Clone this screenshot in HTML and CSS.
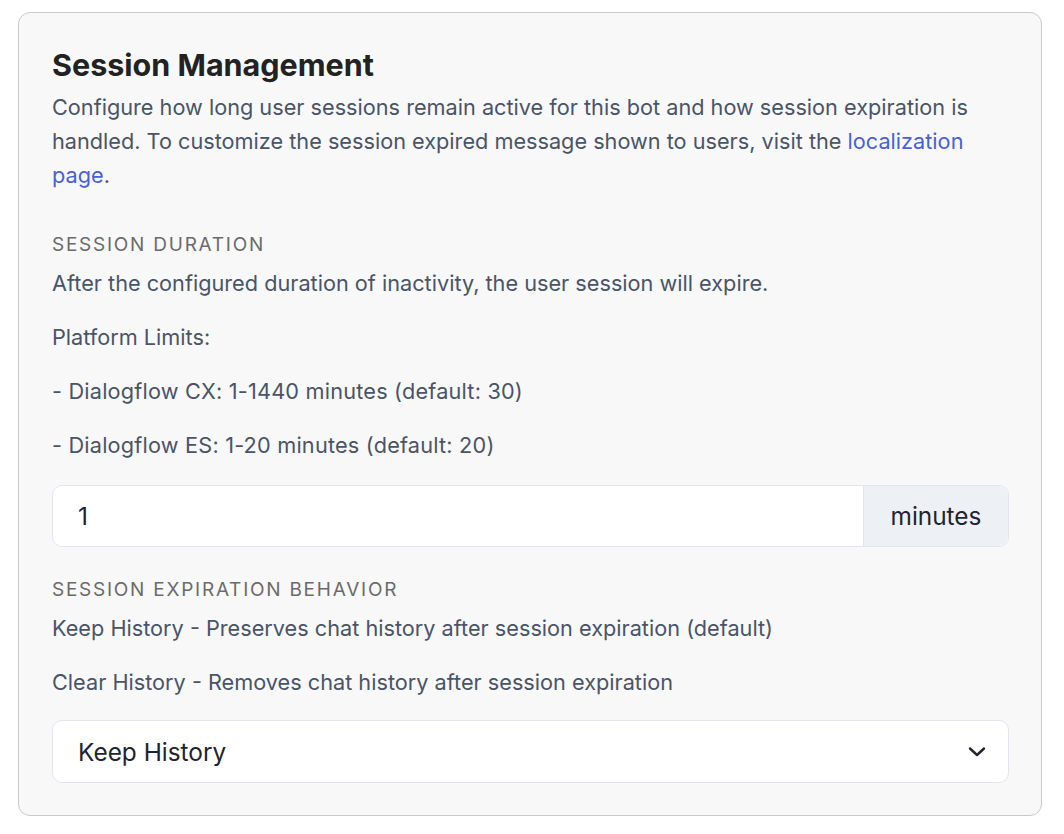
FILE: index.html
```html
<!DOCTYPE html>
<html>
<head>
<meta charset="utf-8">
<link rel="stylesheet" href="styles.css">
</head>
<body>
<section class="card">
  <h2 class="title">Session Management</h2>
  <p class="desc">Configure how long user sessions remain active for this bot and how session expiration is handled. To customize the session expired message shown to users, visit the <a class="link" href="#">localization page</a>.</p>

  <h3 class="label label-first">Session Duration</h3>
  <p class="text text-first">After the configured duration of inactivity, the user session will expire.</p>
  <p class="text">Platform Limits:</p>
  <p class="text nums">- Dialogflow CX: 1-1440 minutes (default: 30)</p>
  <p class="text nums">- Dialogflow ES: 1-20 minutes (default: 20)</p>

  <div class="input-group">
    <div class="input">1</div>
    <div class="addon">minutes</div>
  </div>

  <h3 class="label label-second">Session Expiration Behavior</h3>
  <p class="text text-first">Keep History - Preserves chat history after session expiration (default)</p>
  <p class="text">Clear History - Removes chat history after session expiration</p>

  <div class="select">
    <span>Keep History</span>
    <svg class="chevron" width="18" height="12" viewBox="0 0 18 12"><path d="M2 2.5 L9 9 L16 2.5" fill="none" stroke="#1f2430" stroke-width="2.4" stroke-linecap="round" stroke-linejoin="round"/></svg>
  </div>
</section>
</body>
</html>
```

FILE: styles.css
```css
* { box-sizing: border-box; }
html, body { margin: 0; padding: 0; background: #ffffff; }
body {
  font-family: Inter, "Noto Sans", sans-serif;
  padding: 12px 22px 0 18px;
}
.card {
  width: 1024px;
  background: #f8f8f8;
  border: 1px solid #c9c9c9;
  border-radius: 12px;
  padding: 32px 32px 32px 33px;
}
.title {
  margin: 0;
  font-size: 30.5px;
  line-height: 40px;
  font-weight: 700;
  color: #222222;
}
.desc {
  margin: 5px 0 0 0;
  font-size: 21.7px;
  line-height: 34px;
  color: #4a5467;
}
.link { color: #4a5fd8; text-decoration: none; }
.label {
  margin: 0;
  font-size: 19px;
  line-height: 28px;
  font-weight: 400;
  text-transform: uppercase;
  letter-spacing: 1.75px;
  color: #6b6b6b;
}
.label-first { margin-top: 39px; }
.label-second { margin-top: 29px; }
.text {
  margin: 20px 0 0 0;
  font-size: 21.7px;
  line-height: 34px;
  color: #4a5467;
}
.nums { letter-spacing: 0.2px; }
.text-first { margin-top: 7px; }
.input-group {
  margin-top: 23px;
  display: flex;
  height: 62px;
  border: 1px solid #e1e6ee;
  border-radius: 10px;
  overflow: hidden;
  background: #ffffff;
}
.input {
  flex: 1;
  display: flex;
  align-items: center;
  padding-left: 25px;
  font-size: 24.4px;
  color: #1f2430;
}
.addon {
  display: flex;
  align-items: center;
  justify-content: center;
  width: 145px;
  background: #edf1f6;
  border-left: 1px solid #e1e6ee;
  font-size: 24.4px;
  color: #1f2430;
}
.select {
  margin-top: 21px;
  height: 63px;
  display: flex;
  align-items: center;
  justify-content: space-between;
  padding: 0 22px 0 25px;
  background: #ffffff;
  border: 1px solid #e1e6ee;
  border-radius: 10px;
  font-size: 24.4px;
  color: #1f2430;
}
.chevron { display: block; }
```
